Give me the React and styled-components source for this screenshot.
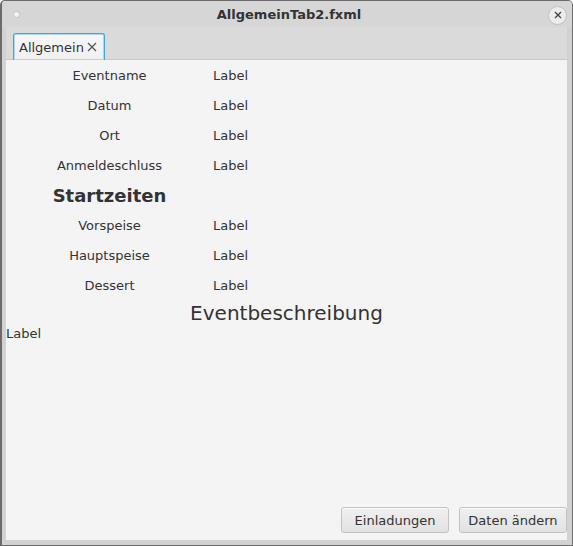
import React from 'react'
import styled, { createGlobalStyle } from 'styled-components'

const GlobalStyle = createGlobalStyle`
    html, body {
        margin: 0;
        padding: 0;
        background: #ffffff;
    }
    body {
        font-family: "DejaVu Sans", "Liberation Sans", sans-serif;
    }
`

const Window = styled.div`
    box-sizing: border-box;
    width: 573px;
    height: 546px;
    border: 1px solid #6b6b6b;
    border-left-width: 2px;
    border-radius: 5px 5px 0 0;
    background: #d4d4d4;
    display: flex;
    flex-direction: column;
    overflow: hidden;
`

const TitleBar = styled.div`
    height: 26px;
    flex: none;
    display: grid;
    grid-template-columns: 44px 1fr 40px;
    align-items: center;
    background: #d6d6d6;

    .title {
        text-align: center;
        font-weight: bold;
        font-size: 13px;
        color: #333;
    }
`

const Dot = styled.div`
    width: 5px;
    height: 5px;
    margin-left: 11px;
    border-radius: 50%;
    background: #f4f4f4;
    border: 1px solid #c4c4c4;
`

const CloseButton = styled.div`
    justify-self: end;
    margin-right: 5px;
    margin-top: 2px;
    width: 17px;
    height: 17px;
    border-radius: 50%;
    background: #ececec;
    border: 1px solid #c2c2c2;
    display: flex;
    align-items: center;
    justify-content: center;
`

const Frame = styled.div`
    flex: 1;
    display: flex;
    padding: 0 5px 5px 4px;
    background: #d2d2d2;
`

const Client = styled.div`
    flex: 1;
    display: flex;
    flex-direction: column;
    background: #f4f4f4;
`

const TabHeader = styled.div`
    height: 33px;
    flex: none;
    box-sizing: border-box;
    display: flex;
    align-items: flex-end;
    padding-left: 7px;
    background: #dadada;
    border-bottom: 1px solid #c8c8c8;
`

const Tab = styled.div`
    box-sizing: border-box;
    height: 27px;
    margin-bottom: -1px;
    padding: 0 7px 0 5px;
    display: flex;
    align-items: center;
    gap: 3px;
    border: 1px solid #39a8e4;
    border-bottom: none;
    border-radius: 3px 3px 0 0;
    background: linear-gradient(#f6f6f6, #f0f0f0);
    font-size: 13px;
    color: #333;
    box-shadow: inset 0 0 0 1px #a9d8f1;
`

const Content = styled.div`
    flex: 1;
    display: flex;
    flex-direction: column;
    color: #333;
    font-size: 13px;
`

const Row = styled.div`
    display: grid;
    grid-template-columns: 207px 1fr;
    align-items: center;
    height: 30px;
`

const Key = styled.div`
    text-align: center;
    font-weight: ${props => props.heading ? 'bold' : 'normal'};
    font-size: ${props => props.heading ? '18px' : '13px'};
`

const Heading = styled.div`
    text-align: center;
    font-size: 20px;
    height: 26px;
    line-height: 26px;
`

const Plain = styled.div`
    height: 16px;
    line-height: 16px;
`

const Footer = styled.div`
    margin-top: auto;
    display: flex;
    justify-content: flex-end;
    gap: 10px;
    padding-bottom: 7px;
`

const Button = styled.button`
    box-sizing: border-box;
    width: 108px;
    height: 26px;
    font-family: inherit;
    font-size: 13px;
    color: #333;
    border: 1px solid #c2c2c2;
    border-radius: 3px;
    background: linear-gradient(#f0f0f0, #e2e2e2);
    box-shadow: inset 0 1px 0 #fbfbfb;
    padding: 0;
`

const rows = [
    ['Eventname', 'Label'],
    ['Datum', 'Label'],
    ['Ort', 'Label'],
    ['Anmeldeschluss', 'Label'],
    ['Startzeiten', '', true],
    ['Vorspeise', 'Label'],
    ['Hauptspeise', 'Label'],
    ['Dessert', 'Label']
]

export default function App() {
    return (
        <>
            <GlobalStyle />
            <Window>
                <TitleBar>
                    <Dot />
                    <div className="title">AllgemeinTab2.fxml</div>
                    <CloseButton>
                        <svg width="8" height="8" viewBox="0 0 8 8">
                            <path d="M1 1L7 7M7 1L1 7" stroke="#444" strokeWidth="1.4" />
                        </svg>
                    </CloseButton>
                </TitleBar>
                <Frame>
                    <Client>
                        <TabHeader>
                            <Tab>
                                Allgemein
                                <svg width="10" height="10" viewBox="0 0 10 10">
                                    <path d="M1 1L9 9M9 1L1 9" stroke="#555" strokeWidth="1.3" />
                                </svg>
                            </Tab>
                        </TabHeader>
                        <Content>
                            {rows.map(([key, value, heading]) => (
                                <Row key={key}>
                                    <Key heading={heading}>{key}</Key>
                                    <div>{value}</div>
                                </Row>
                            ))}
                            <Heading>Eventbeschreibung</Heading>
                            <Plain>Label</Plain>
                            <Footer>
                                <Button>Einladungen</Button>
                                <Button>Daten ändern</Button>
                            </Footer>
                        </Content>
                    </Client>
                </Frame>
            </Window>
        </>
    )
}
